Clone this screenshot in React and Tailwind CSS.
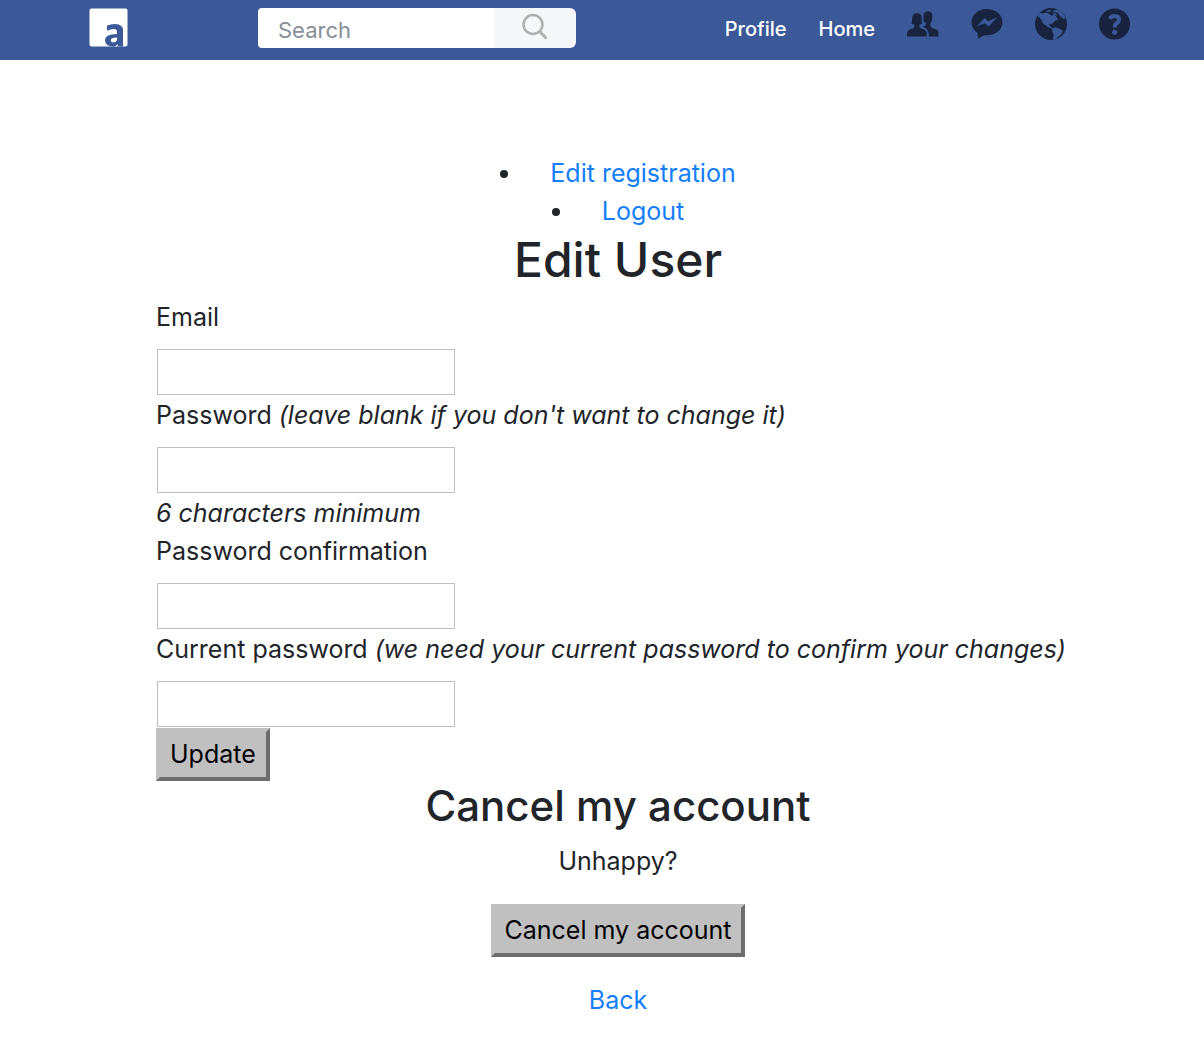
import React from 'react';

function Logo() {
  return (
    <svg viewBox="0 0 39 39" className="block h-[39px] w-[39px]" aria-hidden="true">
      <rect x="0.5" y="0.5" width="38" height="38" rx="2" fill="#fff" />
      <path
        d="M18 17.500 Q21.500 16 26 16 Q34 16 34 22.500 V38.500 H29 L28.500 36.300 Q26.500 39 23 38.500 Q16 37.500 16 32 Q16 26 28 26 V24 Q28 21 25 21 Q21.500 21 18 22.800 Z M28 29.500 Q21.800 29.500 21.800 32.300 Q21.800 34.500 24.300 34.500 Q26.600 34.500 28 32.500 Z"
        fill="#3b5998"
        fillRule="evenodd"
      />
    </svg>
  );
}

function FriendsIcon() {
  return (
    <svg viewBox="0 0 32 32" className="h-8 w-8" fill="#18243f" aria-hidden="true">
      <path d="M16.500 8.500 Q16 3.500 21 3.300 Q26 3.500 25.300 9.500 Q25.300 13.500 23.500 15.500 V18.500 Q24.500 20 28.500 21 Q31.500 22 31.500 25.500 V28.500 H21.800 V26.500 Q21.500 22 18.500 20 L15.800 18.500 Q18 18.300 18.800 17 V15.500 Q18.500 14 16.500 13 Z" />
      <path d="M5 11 Q5 5 10 5 Q14.800 5 14.800 11 Q14.500 15 15.300 15.500 Q13.500 16.500 12.500 16.500 V19.300 Q13.500 20.500 16.500 21.300 Q19.800 22.500 19.800 26 V28.500 H0 V26 Q0 22.500 3.500 21.300 Q7 20.300 7.300 19.300 V16.500 Q5.500 16.500 4.300 15.500 Q5.300 14.500 5 11 Z" />
    </svg>
  );
}

function MessengerIcon() {
  return (
    <svg viewBox="0 0 32 32" className="h-8 w-8" fill="#18243f" aria-hidden="true">
      <path
        fillRule="evenodd"
        d="M16 1 C24.600 1 31.500 6.800 31.500 14.200 C31.500 22 24 27.700 14.500 27.200 Q11.500 27.500 7 31 L6.500 24.700 C2.500 22.300 0.500 18.500 0.500 14.200 C0.500 6.800 7.400 1 16 1 Z M6 18.300 L13.500 10 L17.200 13.300 L25.800 9.500 L17.800 18.600 L13.700 15.200 Z"
      />
    </svg>
  );
}

function GlobeIcon() {
  return (
    <svg viewBox="0 0 32 32" className="h-8 w-8" aria-hidden="true">
      <circle cx="16" cy="16" r="16" fill="#18243f" />
      <g fill="#3b5998">
        <path d="M2 7.500 L4.500 5 L8 5.500 L12 4.500 L15 6.500 L16.500 7.800 L18.500 6.500 L20.500 8 L22 9.500 L23 12 L20.500 12.500 L18.300 14.500 L16.300 16.500 L15 15.500 L13.800 17.500 L15.500 18 L15.800 19.500 L18.500 20 L17.500 21 L13.500 19.500 L11 17.500 L8 15.500 L6.800 12.500 L5 10 Z" />
        <path d="M10.500 3.200 L16 1.500 L15 4 Z M17 3 L22.500 1.500 L27.500 5 L30.500 10 L29 11 L25 8 L22.500 4.500 L20.500 4.300 Z M17.500 5.200 L20 4.700 L22.500 8 L19.500 7 Z" />
        <path d="M17.500 20.500 L20.500 19.300 L23 20.300 L25.500 21.300 L28 23 L26 26.500 L23.500 28.500 L20.500 31.400 L17.800 31.500 L18.800 26.500 L17.300 23.500 Z" />
      </g>
    </svg>
  );
}

function HelpIcon() {
  return (
    <svg viewBox="0 0 32 32" className="h-8 w-8" aria-hidden="true">
      <circle cx="15.500" cy="16" r="15.500" fill="#18243f" />
      <path
        d="M11 11 Q12 8 15.800 8 Q20 8.200 20 11.700 Q20 13.700 17.700 15.200 Q15.700 16.500 15.700 19.500"
        fill="none"
        stroke="#3b5998"
        strokeWidth="4"
      />
      <circle cx="15.600" cy="24.300" r="2.500" fill="#3b5998" />
    </svg>
  );
}

function Navbar() {
  const icons = [
    ['Friends', FriendsIcon],
    ['Messages', MessengerIcon],
    ['Notifications', GlobeIcon],
    ['Help', HelpIcon],
  ];
  return (
    <header className="flex h-[60px] items-start bg-[#3b5998] pt-2 pr-[73px] pl-[89px]">
      <a href="#" aria-label="Home page">
        <Logo />
      </a>
      <form className="ml-[130px] flex h-10 w-[318px]" onSubmit={(e) => e.preventDefault()}>
        <input
          type="text"
          aria-label="Search"
          placeholder="Search"
          className="w-0 grow rounded-l-sm bg-white pt-1 pl-5 text-[22px] text-gray-800 outline-none placeholder:text-[#868e96]"
        />
        <button
          type="submit"
          aria-label="Submit search"
          className="flex w-[82px] justify-center rounded-r-md bg-[#f6f7f9] pt-[5px]"
        >
          <svg viewBox="0 0 28 28" className="h-7 w-7" fill="none" stroke="#b0b0b0" aria-hidden="true">
            <circle cx="12" cy="11.500" r="9.500" strokeWidth="2.500" />
            <path d="M18.700 18.500 L25.500 25.500" strokeWidth="3" />
          </svg>
        </button>
      </form>
      <nav className="ml-auto flex gap-8 text-xl leading-[42px] font-medium text-white">
        <a href="#">Profile</a>
        <a href="#">Home</a>
        {icons.map(([label, Icon]) => (
          <a key={label} href="#" aria-label={label}>
            <Icon />
          </a>
        ))}
      </nav>
    </header>
  );
}

function Field({ id, label, hint, note, type = 'password' }) {
  return (
    <div className="flex flex-col items-start">
      <label htmlFor={id} className="mb-3">
        {label} {hint && <em>{hint}</em>}
      </label>
      <input
        id={id}
        type={type}
        className="m-px h-[46px] w-[298px] border border-[#bfbfbf] bg-white px-2"
      />
      {note && <em>{note}</em>}
    </div>
  );
}

function OutsetButton({ children, type = 'button' }) {
  return (
    <button
      type={type}
      className="block border-4 border-t-[#c0c0c0] border-r-[#6d6d6d] border-b-[#6d6d6d] border-l-[#c0c0c0] bg-[#c0c0c0] px-2.5 pt-[3px] pb-1 text-black"
    >
      {children}
    </button>
  );
}

export default function App() {
  return (
    <div className="bg-white font-['Inter',sans-serif] text-[25px] leading-[38px] text-[#212529]">
      <Navbar />
      <main className="pt-[94px] pr-[124px] pb-[22px] pl-[156px]">
        <ul className="list-inside list-disc text-center">
          <li>
            <a href="#" className="ml-4 text-[#157efb]">Edit registration</a>
          </li>
          <li>
            <a href="#" className="ml-4 text-[#157efb]">Logout</a>
          </li>
        </ul>
        <h2 className="mb-2 text-center text-[48px] leading-[60px] font-medium">Edit User</h2>
        <form onSubmit={(e) => e.preventDefault()}>
          <Field id="email" label="Email" type="email" />
          <Field
            id="password"
            label="Password"
            hint="(leave blank if you don't want to change it)"
            note="6 characters minimum"
          />
          <Field id="confirmation" label="Password confirmation" />
          <Field
            id="current"
            label="Current password"
            hint="(we need your current password to confirm your changes)"
          />
          <OutsetButton type="submit">Update</OutsetButton>
        </form>
        <section className="flex flex-col items-center">
          <h3 className="mb-3 text-[42px] leading-[49px] font-medium">Cancel my account</h3>
          <p className="mb-6">Unhappy?</p>
          <OutsetButton>Cancel my account</OutsetButton>
          <a href="#" className="mt-6 text-[#157efb]">Back</a>
        </section>
      </main>
    </div>
  );
}
